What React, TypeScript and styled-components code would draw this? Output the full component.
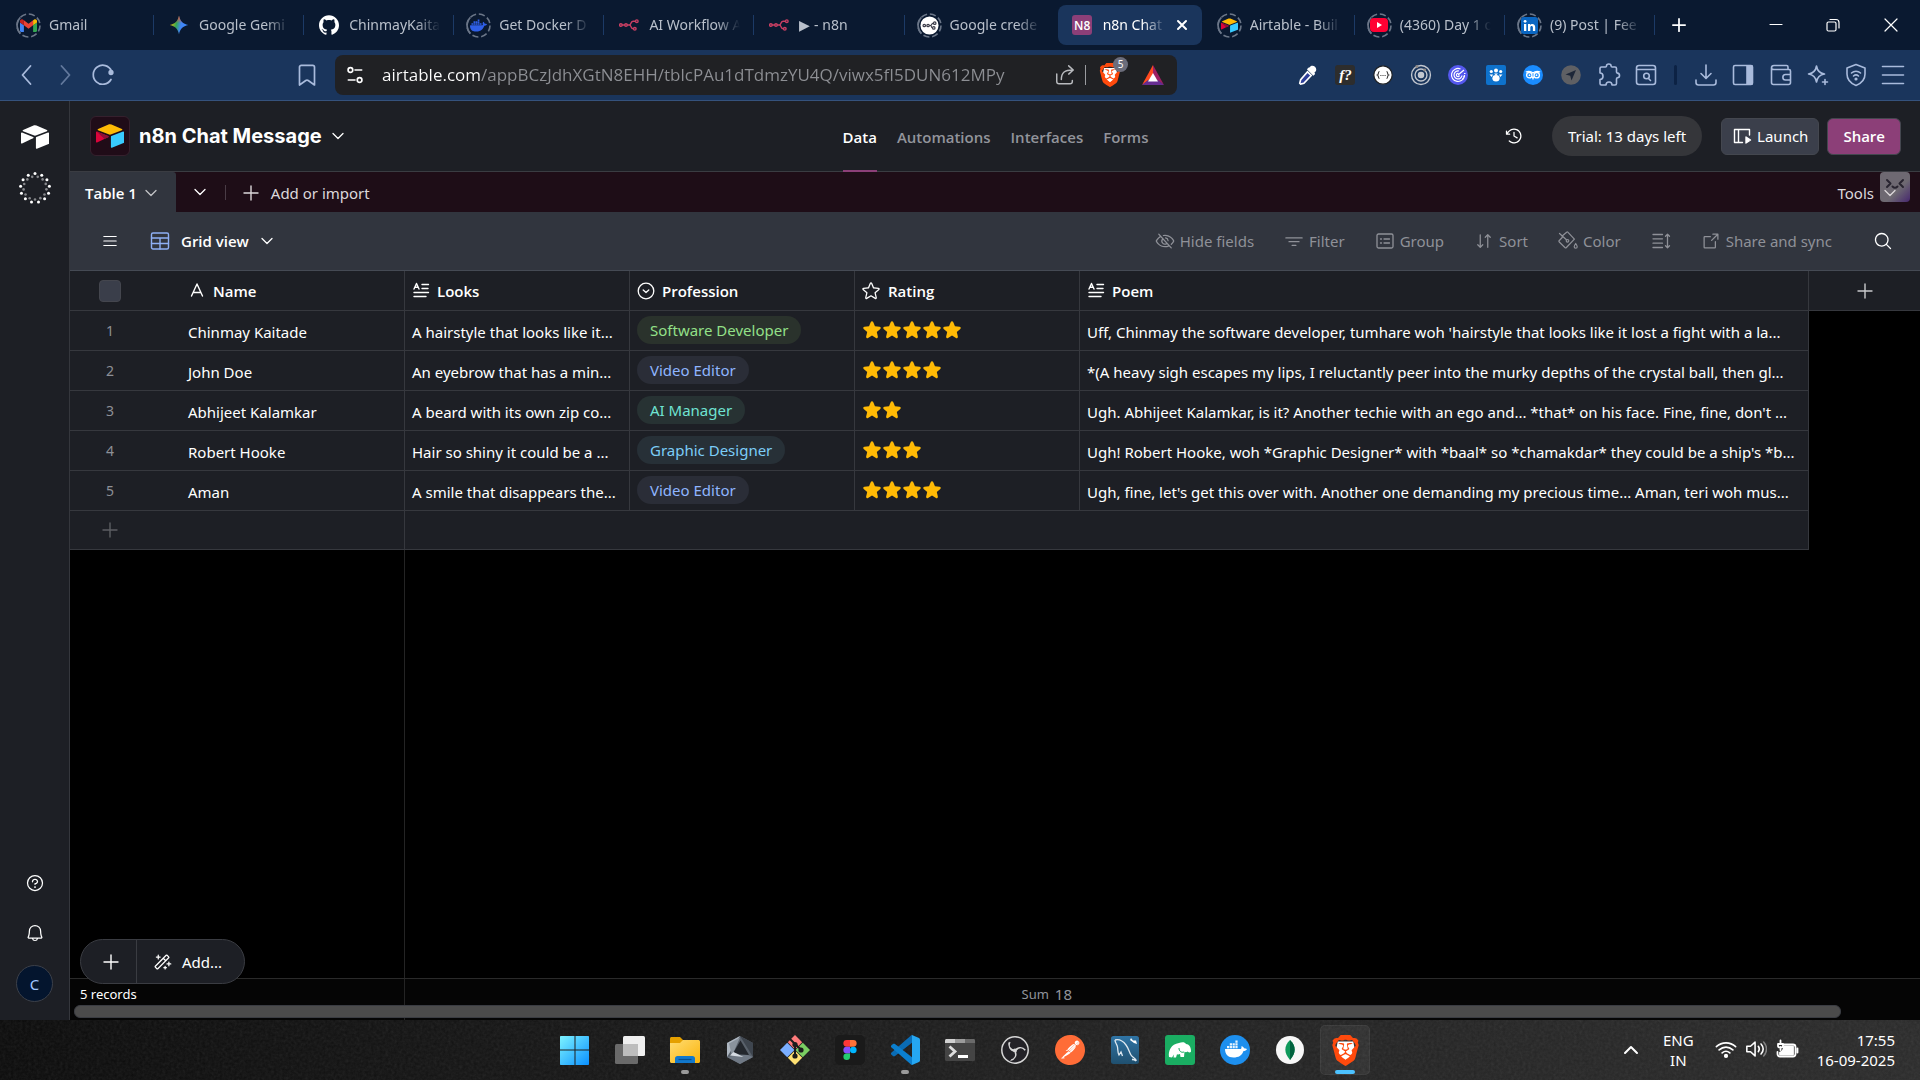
import React from "react";
import styled, { createGlobalStyle, css } from "styled-components";
import {
  PiArrowsDownUp,
  PiArrowSquareOut,
  PiBell,
  PiClockCounterClockwise,
  PiEyeSlash,
  PiFunnelSimple,
  PiList,
  PiMagicWand,
  PiMagnifyingGlass,
  PiQuestion,
  PiStar,
  PiStarFill,
} from "react-icons/pi";
import { SiBrave, SiDocker, SiGithub, SiPostman } from "react-icons/si";

const ui = `"Noto Sans", "Open Sans", sans-serif`;
const uiBold = `"Open Sans", "Noto Sans", sans-serif`;

const GlobalStyle = createGlobalStyle`
  *, *::before, *::after { box-sizing: border-box; }
  body { margin: 0; background: #000; color: #fff; font-family: ${ui}; font-size: 15px; }
  button, input { font: inherit; color: inherit; }
  button { background: none; border: 0; padding: 0; cursor: pointer; }
  svg { display: block; flex: none; }
`;

const Screen = styled.div`
  display: flex;
  flex-direction: column;
  min-height: 100vh;
`;

/* ---------- shared drawings ---------- */

type SvgProps = { size?: number; box?: string; children: React.ReactNode; stroke?: string; sw?: number };

const Line = ({ size = 24, box = "0 0 24 24", stroke = "currentColor", sw = 1.6, children }: SvgProps) => (
  <svg
    width={size}
    height={size}
    viewBox={box}
    fill="none"
    stroke={stroke}
    strokeWidth={sw}
    strokeLinecap="round"
    strokeLinejoin="round"
    aria-hidden="true"
  >
    {children}
  </svg>
);

const Art = ({ size = 24, box = "0 0 24 24", children }: SvgProps) => (
  <svg width={size} height={size} viewBox={box} aria-hidden="true">
    {children}
  </svg>
);

const Chevron = ({ size = 14, sw = 1.3 }: { size?: number; sw?: number }) => (
  <Line size={size} box="0 0 14 14" sw={sw}>
    <path d="M2 4.5 7 9.5l5-5" />
  </Line>
);

const Plus = ({ size = 16, sw = 1.4 }: { size?: number; sw?: number }) => (
  <Line size={size} box="0 0 16 16" sw={sw}>
    <path d="M8 1v14M1 8h14" />
  </Line>
);

const AIR_TOP =
  "M11.992 1.966c-.434 0-.87.086-1.28.257L1.779 5.917c-.503.208-.49.908.012 1.116l8.982 3.558a3.266 3.266 0 0 0 2.454 0l8.982-3.558c.503-.196.503-.908.012-1.116l-8.957-3.694a3.255 3.255 0 0 0-1.272-.257z";
const AIR_RIGHT =
  "M23.4 8.056a.589.589 0 0 0-.222.045l-10.012 3.877a.612.612 0 0 0-.38.564v8.896a.6.6 0 0 0 .821.552L23.62 18.1a.583.583 0 0 0 .38-.551V8.653a.6.6 0 0 0-.6-.596z";
const AIR_LEFT =
  "M.676 8.095a.644.644 0 0 0-.48.19C.086 8.396 0 8.53 0 8.69v8.355c0 .442.515.737.908.54l6.27-3.006.307-.147 2.969-1.436c.466-.22.43-.908-.061-1.092L.883 8.138a.57.57 0 0 0-.207-.044z";

const Airtable = ({ size = 28, mono = false }: { size?: number; mono?: boolean }) => (
  <Art size={size}>
    <path d={AIR_TOP} fill={mono ? "#fff" : "#ffba05"} />
    <path d={AIR_RIGHT} fill={mono ? "#fff" : "#39caff"} />
    <path d={AIR_LEFT} fill={mono ? "#fff" : "#dc043b"} />
    {!mono && <path d="M7.3 14.5 .5 8.1l9.9 3.8c.5.2.5.9.06 1.1z" fill="#8c1036" />}
  </Art>
);

const N8n = ({ size = 20, color = "#c93f63" }: { size?: number; color?: string }) => (
  <Line size={size} box="0 0 20 20" stroke={color} sw={1.4}>
    <circle cx="1.900" cy="10" r="1.300" />
    <circle cx="7" cy="10" r="1.300" />
    <circle cx="17.800" cy="6.200" r="1.300" />
    <circle cx="15.800" cy="13.800" r="1.300" />
    <path d="M3.300 10h2.300M8.400 10h1.800c2.400 0 1-3.800 3.800-3.800h2.400M10.400 10c2.200 0 1 3.800 4 3.800" />
  </Line>
);

const BraveMark = ({ size = 24 }: { size?: number }) => (
  <svg width={size} height={size} viewBox="0 0 24 24" aria-hidden="true">
    <path d="M6 5h12l1 5-2 6-5 4-5-4-2-6z" fill="#fff" />
    <SiBrave size={24} color="#ff4a0d" />
  </svg>
);

/* ---------- browser tabs ---------- */

const TabStrip = styled.div`
  display: flex;
  align-items: center;
  height: 50px;
  padding-left: 4px;
  background: #0a1930;
  color: #b9c0cb;
`;

const TabList = styled.div`
  display: flex;
  flex: 1;
  min-width: 0;
  height: 100%;
  align-items: center;
`;

const TabButton = styled.button<{ $active?: boolean; $divider?: boolean }>`
  display: flex;
  flex: 1 1 40px;
  align-items: center;
  gap: 8px;
  min-width: 0;
  height: 40px;
  padding: 0 14px 0 12px;
  text-align: left;
  ${(p) =>
    p.$divider &&
    css`
      background: linear-gradient(#1c3a66, #1c3a66) right center / 1px 20px no-repeat;
    `}
  ${(p) =>
    p.$active &&
    css`
      flex-basis: 34px;
      margin: 0 3px;
      padding: 0 12px;
      border-radius: 8px;
      background: #1a355c;
      color: #fff;
    `}
`;

const Favicon = styled.span`
  display: grid;
  flex: none;
  place-items: center;
  width: 25px;
  height: 25px;
  > * { grid-area: 1 / 1; }
`;

const Ring = () => (
  <svg width="25" height="25" viewBox="0 0 25 25" fill="none" aria-hidden="true">
    <circle cx="12.5" cy="12.5" r="11.500" stroke="#6b7688" strokeWidth="1.600" strokeDasharray="6.200 2.830" />
    <path d="M4.400 4.400a11.500 11.500 0 0 0 0 16.200" stroke="#6b7688" strokeWidth="1.600" />
  </svg>
);

const TabTitle = styled.span`
  flex: 1;
  min-width: 0;
  overflow: hidden;
  white-space: nowrap;
  font-size: 14px;
  line-height: 20px;
  mask-image: linear-gradient(90deg, #000 calc(100% - 24px), transparent);
`;

const NBadge = styled.span`
  display: grid;
  place-items: center;
  width: 20px;
  height: 20px;
  border-radius: 3px;
  background: #8c3f78;
  color: #fff;
  font-size: 12px;
  font-weight: 600;
  font-family: ${uiBold};
`;

const StripButton = styled.button<{ $w: number }>`
  display: grid;
  flex: none;
  place-items: center;
  width: ${(p) => p.$w}px;
  height: 100%;
  color: #fff;
`;

const WindowControls = styled.div`
  display: flex;
  height: 100%;
  padding-left: 45px;
`;

const GmailMark = () => (
  <Art size={17}>
    <path d="M0 6v13.500c0 .9.7 1.600 1.600 1.600h3.900V11.700L0 7.600z" fill="#4285f4" />
    <path d="M18.500 21.100h3.900c.9 0 1.600-.7 1.600-1.600V7.600l-5.500 4.100z" fill="#34a853" />
    <path d="M5.500 11.700V4.600L12 9.500l6.500-4.900v7.100L12 16.600z" fill="#ea4335" />
    <path d="M18.500 4.600v7.100L24 7.600V5.500c0-2-2.300-3.200-3.900-2z" fill="#fbbc04" />
    <path d="M5.500 4.600v7.100L0 7.600V5.500c0-2 2.300-3.200 3.900-2z" fill="#c5221f" />
  </Art>
);

const STAR4 = "M12 1c1.200 6.200 4.800 9.800 11 11-6.200 1.200-9.800 4.800-11 11-1.200-6.200-4.800-9.800-11-11 6.200-1.200 9.800-4.800 11-11z";

const GeminiMark = () => (
  <Art size={20}>
    <defs>
      <linearGradient id="gem" x1="0" y1="0.4" x2="1" y2="0.6">
        <stop offset="0" stopColor="#fbbc04" />
        <stop offset="0.35" stopColor="#34a853" />
        <stop offset="0.6" stopColor="#4285f4" />
        <stop offset="1" stopColor="#3a8bff" />
      </linearGradient>
      <linearGradient id="gemTop" x1="0" y1="0" x2="0" y2="1">
        <stop offset="0" stopColor="#ff4641" />
        <stop offset="0.4" stopColor="#ff4641" stopOpacity="0" />
      </linearGradient>
    </defs>
    <path d={STAR4} fill="url(#gem)" />
    <path d={STAR4} fill="url(#gemTop)" />
  </Art>
);

const tabs: { title: string; icon: React.ReactNode; ring?: boolean; active?: boolean; divider?: boolean }[] = [
  { title: "Gmail", icon: <GmailMark />, ring: true, divider: true },
  { title: "Google Gemi", icon: <GeminiMark />, divider: true },
  { title: "ChinmayKaita", icon: <SiGithub size={20} color="#fff" />, divider: true },
  { title: "Get Docker D", icon: <SiDocker size={17} color="#2f5fe8" />, ring: true, divider: true },
  { title: "AI Workflow A", icon: <N8n />, divider: true },
  { title: "▶ - n8n", icon: <N8n />, divider: true },
  {
    title: "Google crede",
    ring: true,
    icon: (
      <Art size={19} box="0 0 20 20">
        <circle cx="10" cy="10" r="9.500" fill="#fff" />
        <g fill="none" stroke="#3c3d4a" strokeWidth="1.300">
          <circle cx="4.500" cy="10" r="1.300" />
          <circle cx="8.500" cy="10" r="1.300" />
          <circle cx="15.500" cy="7.500" r="1.300" />
          <circle cx="14.500" cy="12.500" r="1.300" />
          <path d="M10 10h1c1.500 0 1-2.500 3-2.500M11 10c1.500 0 .5 2.500 2.200 2.500" />
        </g>
      </Art>
    ),
  },
  { title: "n8n Chat", icon: <NBadge>N8</NBadge>, active: true },
  { title: "Airtable - Buil", icon: <Airtable size={17} />, ring: true, divider: true },
  {
    title: "(4360) Day 1 o",
    ring: true,
    divider: true,
    icon: (
      <Art size={18} box="0 0 18 18">
        <rect y="2" width="18" height="14" rx="4" fill="#ff0033" />
        <path d="M7 6v6l5-3z" fill="#fff" />
      </Art>
    ),
  },
  {
    title: "(9) Post | Fee",
    ring: true,
    divider: true,
    icon: (
      <Art size={17} box="0 0 17 17">
        <rect width="17" height="17" rx="3" fill="#0a66c2" />
        <path d="M3 7h2.300v7H3zM7 7h2.200v1c1-1.700 5-1.700 5 2v4h-2.300v-3.600c0-2-2.600-2-2.600 0V14H7z" fill="#fff" />
        <circle cx="4.100" cy="4.300" r="1.400" fill="#fff" />
      </Art>
    ),
  },
];

const BrowserTabs = () => (
  <TabStrip>
    <TabList role="tablist" aria-label="Open tabs">
      {tabs.map((t) => (
        <TabButton key={t.title} role="tab" aria-selected={!!t.active} $active={t.active} $divider={t.divider}>
          <Favicon>
            {t.ring && <Ring />}
            {t.icon}
          </Favicon>
          <TabTitle>{t.title}</TabTitle>
          {t.active && (
            <Line size={16} box="0 0 16 16" sw={2}>
              <path d="m4 4 8 8M12 4l-8 8" />
            </Line>
          )}
        </TabButton>
      ))}
    </TabList>
    <StripButton $w={48} aria-label="New tab">
      <Plus sw={2} size={14} />
    </StripButton>
    <WindowControls>
      <StripButton $w={56} aria-label="Minimise">
        <Line size={14} box="0 0 14 14" sw={1.2}><path d="M1 6.500h12" /></Line>
      </StripButton>
      <StripButton $w={58} aria-label="Restore">
        <Line size={14} box="0 0 14 14" sw={1.2}>
          <path d="M1 5.500c0-1 .5-1.500 1.500-1.500h6c1 0 1.500.5 1.500 1.500v6c0 1-.5 1.500-1.500 1.500h-6c-1 0-1.500-.5-1.500-1.500zM4 1.500h6c2 0 3 1 3 3V10" />
        </Line>
      </StripButton>
      <StripButton $w={58} aria-label="Close window">
        <Line size={14} box="0 0 14 14" sw={1.2}><path d="m1 1 12 12M13 1 1 13" /></Line>
      </StripButton>
    </WindowControls>
  </TabStrip>
);

/* ---------- browser toolbar ---------- */

const AddressRow = styled.div`
  display: flex;
  align-items: center;
  height: 51px;
  background: #1a355c;
  border-bottom: 1px solid #35527d;
  color: #a9bbdc;
`;

const NavButtons = styled.div`
  display: grid;
  grid-template-columns: repeat(3, 38px);
  padding-left: 8px;
`;

const IconButton = styled.button<{ $dim?: boolean }>`
  display: grid;
  place-items: center;
  min-width: 24px;
  height: 32px;
  opacity: ${(p) => (p.$dim ? 0.5 : 1)};
`;

const BookmarkSlot = styled.div`
  margin: 0 16px 0 auto;
`;

const NavZone = styled.div`
  display: flex;
  align-items: center;
  width: 335px;
  flex: none;
`;

const AddressBox = styled.div`
  display: flex;
  flex: 1;
  align-items: center;
  height: 40px;
  padding: 0 12px 0 10px;
  border-radius: 8px;
  background: #202124;
  color: #fff;
`;

const AddressInput = styled.input`
  flex: 1;
  min-width: 0;
  margin: 0 8px 0 17px;
  padding: 0;
  border: 0;
  outline: 0;
  font-family: ${uiBold};
  font-size: 17px;
  line-height: 26px;
  background: linear-gradient(90deg, #ffffff 98px, #8d8f94 98px);
  background-clip: text;
  -webkit-text-fill-color: transparent;
`;

const AddressRule = styled.span`
  width: 1px;
  height: 20px;
  margin: 0 12px 0 8px;
  background: #9a9ca0;
`;

const ShieldButton = styled(IconButton)`
  position: relative;
  margin-right: 19px;
`;

const ShieldCount = styled.span`
  position: absolute;
  top: -2px;
  right: -6px;
  display: grid;
  place-items: center;
  width: 15px;
  height: 15px;
  border-radius: 50%;
  background: #6b6d7b;
  color: #fff;
  font-size: 10px;
  line-height: 15px;
`;

const Extensions = styled.div<{ $n: number; $w: number }>`
  display: grid;
  grid-template-columns: repeat(${(p) => p.$n}, 1fr);
  width: ${(p) => p.$w}px;
  flex: none;
`;

const ToolbarRule = styled.span`
  width: 3px;
  height: 20px;
  margin: 0 10px 0 9px;
  border-radius: 2px;
  background: #0c2244;
`;

const RightZone = styled.div`
  display: flex;
  align-items: center;
  padding: 0 8px 0 112px;
`;

const FnBadge = styled.span`
  display: grid;
  place-items: center;
  width: 20px;
  height: 20px;
  border-radius: 3px;
  background: #2d2d2d;
  color: #fff;
  font: italic 700 15px/20px "Liberation Serif", serif;
`;

const Dropper = () => (
  <Art size={22}>
    <path d="M14 3.500c2-3 7-1 7 2.500 0 1.500-.8 2.500-2 3.400l.8 1.400-2 2-7-7 2-2z" fill="#fff" />
    <path d="m11.500 8.500 4 4-8 8.500-3.500 1-1-1 1-4z" fill="#2e3f9a" stroke="#fff" strokeWidth="1.800" />
  </Art>
);

const extA: [string, React.ReactNode][] = [
  ["Colour picker", <Dropper />],
  ["Font finder", <FnBadge>f?</FnBadge>],
  ["JSON viewer", (
    <Art size={20} box="0 0 20 20">
      <circle cx="10" cy="10" r="9.200" fill="#fff" stroke="#1d2024" strokeWidth="1.200" />
      <path d="M6.500 6.500c-1.600 0-.6 3-2 3.500 1.400.5.4 3.500 2 3.500M13.500 6.500c1.600 0 .6 3 2 3.500-1.400.5-.4 3.500-2 3.500" fill="none" stroke="#333" strokeWidth="1.100" />
      <path d="M7.400 10.500h1M9.500 10.500h1M11.600 10.500h1" stroke="#333" strokeWidth="1.100" />
    </Art>
  )],
  ["Orbit", (
    <Line size={22} sw={1.5} stroke="#c3c7cf">
      <circle cx="12" cy="12" r="10.300" />
      <circle cx="12" cy="12" r="6.500" />
      <circle cx="12" cy="12" r="2.800" fill="#c3c7cf" />
      <circle cx="7.500" cy="2.800" r="1" fill="#8f8a88" stroke="#8f8a88" />
      <circle cx="16" cy="6.500" r="0.800" fill="#8f8a88" stroke="#8f8a88" />
    </Line>
  )],
  ["Tracker", (
    <Art size={20} box="0 0 20 20">
      <circle cx="10" cy="10" r="10" fill="#5558ee" />
      <path d="M16.500 10a6.500 6.500 0 1 1-4-6M14 10.500a4 4 0 1 1-3-4.500M10 10l6-5M11.500 10.500a1.600 1.600 0 1 1-1-2" fill="none" stroke="#fff" strokeWidth="1.200" />
      <path d="M16 8.500h1.500M15.500 11.500h1.500M14 14h1.500" stroke="#fff" strokeWidth="1.200" />
    </Art>
  )],
  ["Community", (
    <Art size={20} box="0 0 20 20">
      <rect width="20" height="20" rx="2" fill="#0e72cc" />
      <circle cx="10" cy="5.500" r="2" fill="#fff" /><circle cx="5.300" cy="6.500" r="1.600" fill="#fff" /><circle cx="14.700" cy="6.500" r="1.600" fill="#fff" />
      <path d="M3.500 9.500h3.500l-1.300 2.500zM16.500 9.500H13l1.300 2.500zM8 8.500h4L10 10.500z" fill="#fff" />
      <ellipse cx="10" cy="13.300" rx="3.600" ry="3.200" fill="#fff" />
    </Art>
  )],
  ["Owl", (
    <Art size={20} box="0 0 20 20">
      <circle cx="10" cy="10" r="10" fill="#1a8cff" />
      <g fill="none" stroke="#fff" strokeWidth="1.300"><circle cx="6.300" cy="10.200" r="2.700" /><circle cx="13.700" cy="10.200" r="2.700" /><path d="M9.200 11.500 10 13.500l.8-2M2.800 7c3-1.200 5.500-.5 7.200 1 1.700-1.500 4.200-2.200 7.200-1" /></g>
      <circle cx="6.500" cy="10.200" r="0.900" fill="#fff" /><circle cx="13.500" cy="10.200" r="0.900" fill="#fff" />
    </Art>
  )],
  ["Navigator", (
    <Art size={20} box="0 0 20 20">
      <circle cx="10" cy="10" r="9.800" fill="#5f6064" />
      <path d="m15 5-4.500 10.500-1.300-4.700L4.500 9.500z" fill="#1d2638" />
    </Art>
  )],
  ["Extensions", (
    <Line size={24}>
      <path d="M3 5.500C3 4.500 3.600 4 4.500 4h4c.600 0 1-.4 1-1 0-2.700 4.600-2.700 4.600 0 0 .6.4 1 1 1H18c1 0 1.500.5 1.500 1.500V9c0 .7.4 1 1 1.100 2.700.4 2.700 4.300 0 4.700-.6.100-1 .4-1 1.100v4.600c0 1-.5 1.500-1.500 1.500h-3c0-4-6-4-6 0H4.500c-.9 0-1.500-.5-1.500-1.500v-4c4 0 4-6.500 0-6.500z" />
    </Line>
  )],
  ["Search tabs", (
    <Line size={24}>
      <rect x="2.500" y="2.500" width="19" height="19" rx="2.500" />
      <path d="M3 6.500h18M14.500 15.500l2 2" /><circle cx="12.500" cy="13" r="2.800" />
    </Line>
  )],
];

const extB: [string, React.ReactNode][] = [
  ["Downloads", <Line><path d="M12 2v13M7 10.500l5 5 5-5M2 17v2.500c0 1.500.8 2.500 2.500 2.500h15c1.700 0 2.500-1 2.500-2.500V17" /></Line>],
  ["Sidebar", <Line><rect x="2.500" y="2.500" width="19" height="19" rx="1.500" /><path d="M16 3h5v18h-5z" fill="currentColor" /></Line>],
  ["Wallet", <Line><path d="M2.500 5c0-1.600 1-2.500 2.500-2.500h12.500c1 0 1.500.5 1.500 1.500v2.500M2.500 5c0 1 1 1.500 2.500 1.500h15c1 0 1.500.5 1.500 1.500v11.500c0 1-.5 2-2 2H4.500c-1.200 0-2-1-2-2zM21.500 11.500h-5c-3.500 0-3.500 5.500 0 5.500h5" /></Line>],
  ["Leo AI", <Line><path d="M10.500 3c.8 5 3 7.200 8 8-5 .8-7.200 3-8 8-.8-5-3-7.200-8-8 5-.8 7.200-3 8-8zM19 16.500v5M16.500 19h5" /></Line>],
  ["VPN", <Line><path d="M12 1.500 21 5v6c0 6-4 9.500-9 11.500C7 20.500 3 17 3 11V5zM7.500 10c2.500-2.300 6.500-2.300 9 0M9.500 13c1.500-1.300 3.500-1.300 5 0" /><circle cx="12" cy="16" r="0.800" /></Line>],
  ["Menu", <Line><path d="M1.500 3.500h21M1.500 12h21M1.500 20.500h21" /></Line>],
];

const AddressBar = () => (
  <AddressRow>
    <NavZone>
      <NavButtons>
        <IconButton aria-label="Back"><Line sw={1.8}><path d="m15.500 3-8 9 8 9" /></Line></IconButton>
        <IconButton aria-label="Forward" $dim><Line sw={1.8}><path d="m8.500 3 8 9-8 9" /></Line></IconButton>
        <IconButton aria-label="Reload">
          <Line sw={1.7}><path d="M20 16.500A9.500 9.500 0 1 1 20.500 8" /><circle cx="20" cy="9.500" r="1.800" fill="currentColor" /></Line>
        </IconButton>
      </NavButtons>
      <BookmarkSlot>
        <IconButton aria-label="Bookmark"><Line sw={1.7}><path d="M4.500 4c0-1 .8-1.700 1.800-1.700h11.400c1 0 1.800.7 1.800 1.700v18l-6.300-4.500c-.8-.5-1.600-.5-2.400 0L4.500 22z" /></Line></IconButton>
      </BookmarkSlot>
    </NavZone>
    <AddressBox>
      <Line size={20} sw={2}>
        <circle cx="6.500" cy="6" r="2.800" /><path d="M12 6h8M4 18h8" /><circle cx="17.500" cy="18" r="2.800" />
      </Line>
      <AddressInput aria-label="Address" defaultValue="airtable.com/appBCzJdhXGtN8EHH/tblcPAu1dTdmzYU4Q/viwx5fI5DUN612MPy" />
      <IconButton aria-label="Share page">
        <Line size={22} stroke="#b9bbbf"><path d="M3 11v8c0 1.500 1 2.500 2.500 2.500h12c1.500 0 2.500-1 2.500-2.500v-1M8 17C8 9 12 6.500 20.500 6.500M16 2l5 4.500-5 4.500" /></Line>
      </IconButton>
      <AddressRule />
      <ShieldButton aria-label="Shields">
        <BraveMark size={24} />
        <ShieldCount>5</ShieldCount>
      </ShieldButton>
      <IconButton aria-label="Rewards">
        <Art size={24}>
          <path d="M12 2 1 22l11-8z" fill="#ff4a1f" />
          <path d="M12 2l11 20-11-8z" fill="#9e1f63" />
          <path d="M1 22h22l-6-5H7z" fill="#662d91" />
          <path d="m12 10 5 8.500H7z" fill="#fff" />
        </Art>
      </IconButton>
    </AddressBox>
    <RightZone>
      <Extensions $n={10} $w={376}>
        {extA.map(([name, icon]) => <IconButton key={name} aria-label={name}>{icon}</IconButton>)}
      </Extensions>
      <ToolbarRule />
      <Extensions $n={6} $w={225}>
        {extB.map(([name, icon]) => <IconButton key={name} aria-label={name}>{icon}</IconButton>)}
      </Extensions>
    </RightZone>
  </AddressRow>
);

/* ---------- airtable shell ---------- */

const Workspace = styled.div`
  display: flex;
  flex: 1;
  background: #1d1f25;
`;

const Rail = styled.aside`
  display: flex;
  flex-direction: column;
  align-items: center;
  width: 70px;
  flex: none;
  padding: 20px 0 18px;
  border-right: 1px solid #35373d;
`;

const RailTop = styled.div`
  display: grid;
  gap: 19px;
  justify-items: center;
  margin-bottom: auto;
`;

const RailBottom = styled.div`
  display: grid;
  gap: 14px;
  justify-items: center;
`;

const RailButton = styled(IconButton)`
  height: 36px;
`;

const Avatar = styled.button`
  display: grid;
  place-items: center;
  width: 37px;
  height: 37px;
  border: 1px solid #3c4049;
  border-radius: 50%;
  background: #04152e;
  color: #a0c6ff;
`;

const Main = styled.div`
  display: flex;
  flex: 1;
  min-width: 0;
  flex-direction: column;
`;

const BaseHeader = styled.header`
  display: grid;
  grid-template-columns: 1fr auto 1fr;
  align-items: center;
  height: 71px;
  padding: 0 19px 0 20px;
  border-bottom: 1px solid #3a3c42;
`;

const BaseTitle = styled.button`
  display: flex;
  align-items: center;
  gap: 9px;
  justify-self: start;
  font-family: Inter, "Open Sans", sans-serif;
  font-size: 20px;
  font-weight: 700;
`;

const BaseIcon = styled.span`
  display: grid;
  place-items: center;
  width: 40px;
  height: 40px;
  border: 1px solid #35202d;
  border-radius: 6px;
  background: #200c18;
`;

const SectionNav = styled.nav`
  display: flex;
  align-self: stretch;
  gap: 20px;
`;

const SectionLink = styled.a<{ $on?: boolean }>`
  display: flex;
  align-items: center;
  padding-top: 3px;
  border-bottom: 2px solid ${(p) => (p.$on ? "#8c3f78" : "transparent")};
  margin-bottom: -1px;
  color: ${(p) => (p.$on ? "#fff" : "#92949b")};
  font-family: ${uiBold};
  font-size: 15px;
  font-weight: 600;
  text-decoration: none;
`;

const HeaderActions = styled.div`
  display: flex;
  align-items: center;
  justify-content: flex-end;
`;

const TrialPill = styled.button`
  height: 40px;
  margin: 0 19px 0 26px;
  padding: 0 16px;
  border-radius: 20px;
  background: #35363a;
`;

const HeaderButton = styled.button<{ $primary?: boolean }>`
  display: flex;
  align-items: center;
  gap: 5px;
  height: 37px;
  margin-left: ${(p) => (p.$primary ? 8 : 0)}px;
  padding: 0 ${(p) => (p.$primary ? 15 : 10)}px;
  border: 1px solid #44474f;
  border-radius: 6px;
  background: ${(p) => (p.$primary ? "#8c3f78" : "#3b3f4b")};
  font-family: ${(p) => (p.$primary ? uiBold : ui)};
  font-weight: ${(p) => (p.$primary ? 600 : 400)};
`;

const TableStrip = styled.div`
  display: flex;
  align-items: center;
  height: 40px;
  padding-right: 23px;
  background: #1e0d17;
`;

const TableTab = styled.button`
  display: flex;
  align-items: center;
  gap: 7px;
  height: 100%;
  padding: 1px 18px 0 15px;
  border-radius: 0 3px 0 0;
  background: #31353e;
  font-family: ${uiBold};
  font-weight: 600;
  font-size: 15px;
  svg { opacity: 0.7; }
`;

const StripRule = styled.span`
  width: 1px;
  height: 15px;
  margin: 0 17px 0 18px;
  background: #4a3c46;
`;

const PlainButton = styled.button<{ $gap?: number; $strong?: boolean }>`
  display: flex;
  align-items: center;
  gap: ${(p) => p.$gap ?? 5}px;
  min-height: 32px;
  color: inherit;
  ${(p) =>
    p.$strong &&
    css`
      font-family: ${uiBold};
      font-weight: 600;
    `}
`;

const MoreTables = styled(PlainButton)`
  margin-left: 17px;
`;

const ToolsArea = styled.div`
  position: relative;
  align-self: stretch;
  display: flex;
  margin-left: auto;
  padding-top: 1px;
`;

const ToolsButton = styled(PlainButton)`
  position: relative;
  color: #dcd8db;
`;

const BotBadge = styled.span`
  position: absolute;
  top: 0;
  right: -13px;
  width: 30px;
  height: 30px;
  border-radius: 4px;
  background: linear-gradient(135deg, #77747c 60%, #4b2a78);
  opacity: 0.9;
`;

const ViewBar = styled.div`
  display: flex;
  align-items: center;
  height: 59px;
  padding: 0 27px 0 31px;
  background: #31353e;
  border-bottom: 1px solid #454a54;
`;

const ViewName = styled.div`
  display: flex;
  align-items: center;
  gap: 31px;
`;

const ViewTools = styled.div`
  display: flex;
  align-items: center;
  gap: 30px;
  margin-left: auto;
  color: #8f9198;
`;

const SearchButton = styled(PlainButton)`
  margin-left: 11px;
  color: #fff;
`;

const AddImport = styled(PlainButton)`
  padding-top: 1px;
  color: #dcd8db;
`;

/* ---------- grid ---------- */

const GridArea = styled.div`
  position: relative;
  display: flex;
  flex: 1;
  flex-direction: column;
  background: #000;
`;

const DataTable = styled.table`
  width: 100%;
  table-layout: fixed;
  border-collapse: separate;
  border-spacing: 0;
`;

const line = "1px solid #36383e";

const HeadCell = styled.th<{ $pad?: number }>`
  height: 40px;
  padding: 0 0 0 ${(p) => p.$pad ?? 8}px;
  background: #1d1f25;
  border-bottom: ${line};
  border-right: ${line};
  font-family: ${uiBold};
  font-weight: 600;
  font-size: 15px;
  text-align: left;
  &:first-child { border-right: 0; }
  &:last-child { border-right: 0; }
`;

const HeadLabel = styled.span`
  display: flex;
  align-items: center;
  gap: 7px;
  padding-top: 1px;
`;

const SelectAll = styled.input`
  appearance: none;
  display: block;
  width: 22px;
  height: 22px;
  margin: 0 0 0 29px;
  border: 1px solid #44464e;
  border-radius: 4px;
  background: #3a3e4a;
`;

const Cell = styled.td<{ $pad?: number }>`
  height: 40px;
  padding: 3px 4px 0 ${(p) => p.$pad ?? 7}px;
  background: #1d1f25;
  border-bottom: ${line};
  border-right: ${line};
  overflow: hidden;
  white-space: nowrap;
  line-height: 20px;
`;

const PlainCell = styled(Cell)`
  padding-top: 0;
`;

const NumberCell = styled(Cell)`
  padding: 0;
  border-right: 0;
  text-align: center;
  color: #8d9097;
  font-size: 14px;
`;

const AddCell = styled(Cell)`
  height: 39px;
  padding: 0;
`;

const CenterButton = styled.button`
  display: grid;
  place-items: center;
  width: 100%;
  height: 38px;
  color: #c9cacd;
`;

const AddRowButton = styled(CenterButton)`
  width: 80px;
  color: #5c5e63;
`;

const Pill = styled.span<{ $bg: string; $fg: string }>`
  display: block;
  width: fit-content;
  height: 28px;
  margin-bottom: 1px;
  padding: 0 13px;
  border-radius: 14px;
  background: ${(p) => p.$bg};
  color: ${(p) => p.$fg};
  line-height: 29px;
`;

const Stars = styled.span`
  display: flex;
  margin-bottom: 1px;
  color: #ffba05;
`;

const Rest = styled.div`
  display: flex;
  flex: 1;
`;

const FrozenEdge = styled.div`
  width: 335px;
  border-right: 1px solid #242424;
`;

const AddPill = styled.div`
  position: absolute;
  left: 10px;
  bottom: 36px;
  display: flex;
  height: 45px;
  border: 1px solid #3a3c42;
  border-radius: 23px;
  background: #1d1f25;
`;

const PillButton = styled.button<{ $first?: boolean }>`
  display: flex;
  align-items: center;
  gap: 10px;
  padding: 0 ${(p) => (p.$first ? 17 : 22)}px 0 ${(p) => (p.$first ? 22 : 15)}px;
  border-right: ${(p) => (p.$first ? "1px solid #3a3c42" : "0")};
`;

const SummaryBar = styled.footer`
  display: grid;
  grid-template-columns: 335px 1fr;
  height: 42px;
  border-top: 1px solid #2a2a2a;
  background: #050505;
  font-size: 13px;
  line-height: 18px;
`;

const RecordCount = styled.div`
  padding: 6px 10px 0;
  border-right: 1px solid #242424;
`;

const Sum = styled.div`
  display: flex;
  gap: 6px;
  justify-content: flex-end;
  width: 667px;
  padding-top: 6px;
  color: #92949b;
`;

const SumValue = styled.span`
  font-size: 15px;
`;

const ScrollBar = styled.div`
  position: absolute;
  left: 4px;
  right: 79px;
  bottom: 2px;
  height: 13px;
  border: 1px solid #3a3c42;
  border-radius: 6px;
  background: #4b4b4b;
`;

const LongText = () => (
  <Line size={18} box="0 0 18 18" sw={1.4}>
    <path d="M2 7 4.500 1.500 7 7M2.900 5.200h3.200M10 2.500h6.500M10 6.500h6M2 10.500h14.500M2 14.500h12" />
  </Line>
);

const columns: [string, React.ReactNode, number][] = [
  ["Name", <Line size={18} box="0 0 18 18" sw={1.4}><path d="M3.500 14 9 2l5.500 12M5.500 10.500h7" /></Line>, 38],
  ["Looks", <LongText />, 7],
  ["Profession", <Line size={18} box="0 0 18 18" sw={1.3}><circle cx="9" cy="9" r="7.800" /><path d="m6.200 8 2.800 2.500L11.800 8" /></Line>, 7],
  ["Rating", <PiStar size={20} />, 6],
  ["Poem", <LongText />, 7],
];

type Row = { name: string; looks: string; job: string; bg: string; fg: string; rating: number; poem: string };

const records: Row[] = [
  { name: "Chinmay Kaitade", looks: "A hairstyle that looks like it...", job: "Software Developer", bg: "#2a322c", fg: "#93e088", rating: 5, poem: "Uff, Chinmay the software developer, tumhare woh 'hairstyle that looks like it lost a fight with a la..." },
  { name: "John Doe", looks: "An eyebrow that has a min...", job: "Video Editor", bg: "#2a2d37", fg: "#8fb5ff", rating: 4, poem: "*(A heavy sigh escapes my lips, I reluctantly peer into the murky depths of the crystal ball, then gl..." },
  { name: "Abhijeet Kalamkar", looks: "A beard with its own zip co...", job: "AI Manager", bg: "#273233", fg: "#6fe3d2", rating: 2, poem: "Ugh. Abhijeet Kalamkar, is it? Another techie with an ego and... *that* on his face. Fine, fine, don't ..." },
  { name: "Robert Hooke", looks: "Hair so shiny it could be a ...", job: "Graphic Designer", bg: "#273037", fg: "#7ccdf7", rating: 3, poem: "Ugh! Robert Hooke, woh *Graphic Designer* with *baal* so *chamakdar* they could be a ship's *b..." },
  { name: "Aman", looks: "A smile that disappears the...", job: "Video Editor", bg: "#2a2d37", fg: "#8fb5ff", rating: 4, poem: "Ugh, fine, let's get this over with. Another one demanding my precious time... Aman, teri woh mus..." },
];

const Grid = () => (
  <GridArea>
    <DataTable>
      <colgroup>
        <col style={{ width: 80 }} />
        <col style={{ width: 255 }} />
        <col style={{ width: 225 }} />
        <col style={{ width: 225 }} />
        <col style={{ width: 225 }} />
        <col />
        <col style={{ width: 111 }} />
      </colgroup>
      <thead>
        <tr>
          <HeadCell $pad={0}><SelectAll type="checkbox" aria-label="Select all records" /></HeadCell>
          {columns.map(([name, icon, pad]) => (
            <HeadCell key={name} $pad={pad} scope="col"><HeadLabel>{icon}{name}</HeadLabel></HeadCell>
          ))}
          <HeadCell $pad={0}><CenterButton aria-label="Add field"><Plus /></CenterButton></HeadCell>
        </tr>
      </thead>
      <tbody>
        {records.map((r, i) => (
          <tr key={r.name}>
            <NumberCell>{i + 1}</NumberCell>
            <Cell $pad={38}>{r.name}</Cell>
            <Cell>{r.looks}</Cell>
            <PlainCell><Pill $bg={r.bg} $fg={r.fg}>{r.job}</Pill></PlainCell>
            <PlainCell>
              <Stars role="img" aria-label={`${r.rating} stars`}>
                {Array.from({ length: r.rating }, (_, n) => <PiStarFill key={n} size={20} />)}
              </Stars>
            </PlainCell>
            <Cell>{r.poem}</Cell>
          </tr>
        ))}
        <tr>
          <AddCell colSpan={2}><AddRowButton aria-label="Add record"><Plus /></AddRowButton></AddCell>
          <AddCell colSpan={4} />
        </tr>
      </tbody>
    </DataTable>
    <Rest><FrozenEdge /></Rest>
    <SummaryBar>
      <RecordCount>5 records</RecordCount>
      <Sum>Sum <SumValue>18</SumValue></Sum>
    </SummaryBar>
    <ScrollBar />
    <AddPill>
      <PillButton $first aria-label="Add record"><Plus /></PillButton>
      <PillButton><PiMagicWand size={20} />Add...</PillButton>
    </AddPill>
  </GridArea>
);

const Shell = () => (
  <Workspace>
    <Rail>
      <RailTop>
        <IconButton aria-label="Home"><Airtable size={28} mono /></IconButton>
        <Art size={32} box="0 0 32 32">
          {Array.from({ length: 13 }, (_, i) => {
            const a = (i / 13) * Math.PI * 2 - Math.PI / 2;
            return (
              <g key={i}>
                <circle cx={16 + 14.5 * Math.cos(a)} cy={16 + 14.5 * Math.sin(a)} r="1.500" fill="#fff" />
                <circle cx={16 + 11.5 * Math.cos(a + 0.24)} cy={16 + 11.5 * Math.sin(a + 0.24)} r="1.300" fill="#85868a" />
              </g>
            );
          })}
        </Art>
      </RailTop>
      <RailBottom>
        <RailButton aria-label="Help"><PiQuestion size={20} /></RailButton>
        <RailButton aria-label="Notifications"><PiBell size={20} /></RailButton>
        <Avatar aria-label="Account">C</Avatar>
      </RailBottom>
    </Rail>
    <Main>
      <BaseHeader>
        <BaseTitle>
          <BaseIcon><Airtable size={28} /></BaseIcon>
          n8n Chat Message
          <Chevron />
        </BaseTitle>
        <SectionNav>
          <SectionLink href="#data" $on>Data</SectionLink>
          <SectionLink href="#automations">Automations</SectionLink>
          <SectionLink href="#interfaces">Interfaces</SectionLink>
          <SectionLink href="#forms">Forms</SectionLink>
        </SectionNav>
        <HeaderActions>
          <IconButton aria-label="History"><PiClockCounterClockwise size={20} /></IconButton>
          <TrialPill>Trial: 13 days left</TrialPill>
          <HeaderButton>
            <Line size={20} box="0 0 20 20" sw={1.4}>
              <path d="M10.500 16.500H2.500v-13h15V9M6.500 3.500v13" />
              <path d="m14 11 4.500 3-4.500 3z" fill="currentColor" />
            </Line>
            Launch
          </HeaderButton>
          <HeaderButton $primary>Share</HeaderButton>
        </HeaderActions>
      </BaseHeader>
      <TableStrip>
        <TableTab>Table 1 <Chevron /></TableTab>
        <MoreTables aria-label="All tables"><Chevron /></MoreTables>
        <StripRule />
        <AddImport $gap={12}><Plus />Add or import</AddImport>
        <ToolsArea>
          <BotBadge>
            <Line size={30} box="0 0 30 30" stroke="#2a2733" sw={2}>
              <path d="m7 8 3.500 3.500L7 15M23 8l-3.500 3.500L23 15M12.500 14.500c1.500 1.500 3.500 1.500 5 0" />
            </Line>
          </BotBadge>
          <ToolsButton $gap={9}>Tools <Chevron /></ToolsButton>
        </ToolsArea>
      </TableStrip>
      <ViewBar>
        <ViewName>
          <PlainButton aria-label="Toggle views"><PiList size={18} /></PlainButton>
          <PlainButton $gap={11} $strong>
            <Line size={20} box="0 0 20 20" stroke="#8fb0f5" sw={1.4}>
              <rect x="1.500" y="2" width="17" height="16" rx="1.500" /><path d="M1.500 7h17M1.500 12.500h17M10 7v11" />
            </Line>
            Grid view
            <Chevron />
          </PlainButton>
        </ViewName>
        <ViewTools>
          <PlainButton><PiEyeSlash size={20} />Hide fields</PlainButton>
          <PlainButton><PiFunnelSimple size={20} />Filter</PlainButton>
          <PlainButton>
            <Line size={20} box="0 0 20 20" sw={1.3}>
              <rect x="2" y="3" width="16" height="14" rx="1.500" /><path d="M5.500 8h1M5.500 12h1M9 8h5.500M9 12h5.500" />
            </Line>
            Group
          </PlainButton>
          <PlainButton><PiArrowsDownUp size={20} />Sort</PlainButton>
          <PlainButton>
            <Line size={20} box="0 0 20 20" sw={1.2}>
              <path d="M1.500 2.500 8.700 9M4.200 5 8.600 1.200c.4-.4.8-.4 1.200 0l6.600 6.900-8 8.400c-.5.500-1 .5-1.500 0L1.300 11c-.5-.5-.5-1 0-1.500L4.200 6.500z" />
              <circle cx="9.500" cy="9.800" r="1.300" />
              <path d="M17.700 12.500c1 1.400 1.500 2.300 1.500 3.200a1.500 1.500 0 0 1-3 0c0-.9.5-1.800 1.500-3.200z" />
            </Line>
            Color
          </PlainButton>
          <PlainButton aria-label="Row height">
            <Line size={20} box="0 0 20 20" sw={1.3}>
              <path d="M2 3.500h9.500M2 7.800h9.500M2 12.200h9.500M2 16.500h9.500M16.500 3.500v13M14.500 5.300l2-2 2 2M14.500 14.700l2 2 2-2" />
            </Line>
          </PlainButton>
          <PlainButton><PiArrowSquareOut size={20} />Share and sync</PlainButton>
          <SearchButton aria-label="Search"><PiMagnifyingGlass size={20} /></SearchButton>
        </ViewTools>
      </ViewBar>
      <Grid />
    </Main>
  </Workspace>
);

/* ---------- taskbar ---------- */

const TaskbarRow = styled.div`
  position: relative;
  display: grid;
  grid-template-columns: 1fr auto 1fr;
  align-items: center;
  height: 60px;
  background: linear-gradient(90deg, #0a0a0a, #151515 30%, #202020 60%, #2a2a2a);
`;

const Grain = styled.svg`
  position: absolute;
  inset: 0;
  width: 100%;
  height: 100%;
  opacity: 0.1;
`;

const Apps = styled.div`
  display: flex;
  grid-column: 2;
  gap: 5px;
`;

const AppButton = styled.button<{ $mark?: "open" | "active" }>`
  position: relative;
  display: grid;
  place-items: center;
  width: 50px;
  height: 50px;
  border-radius: 5px;
  ${(p) => p.$mark === "active" && css`background: rgba(255, 255, 255, 0.06); box-shadow: inset 0 0 0 1px rgba(255, 255, 255, 0.05);`}
  ${(p) =>
    p.$mark &&
    css`
      &::after {
        content: "";
        position: absolute;
        bottom: 1px;
        width: ${p.$mark === "active" ? 20 : 8}px;
        height: 4px;
        border-radius: 2px;
        background: ${p.$mark === "active" ? "#4cc2ff" : "#9a9a9a"};
      }
    `}
`;

const Tray = styled.div`
  position: relative;
  display: flex;
  align-items: center;
  justify-content: flex-end;
  padding-right: 25px;
  font-size: 15px;
  line-height: 20px;
`;

const TrayText = styled.div<{ $align: "center" | "right"; $m: string }>`
  margin: ${(p) => p.$m};
  text-align: ${(p) => p.$align};
`;

const TrayIcons = styled.div`
  display: flex;
  gap: 8px;
`;

const apps: [string, React.ReactNode, ("open" | "active")?][] = [
  ["Start", (
    <Art size={30} box="0 0 30 30">
      <defs><linearGradient id="win" x1="0" y1="0" x2="1" y2="1"><stop offset="0" stopColor="#7df3ff" /><stop offset="1" stopColor="#0a90ff" /></linearGradient></defs>
      <path d="M0 2c0-.6.400-1 1-1h13.500v13.500H0zM15.500 1H28c.6 0 1 .4 1 1v12.500H15.500zM0 15.500h14.500V30H1c-.6 0-1-.4-1-1zM15.500 15.500H29V29c0 .6-.4 1-1 1H15.500z" fill="url(#win)" />
    </Art>
  )],
  ["Task view", (
    <Art size={30} box="0 0 30 30">
      <rect x="0" y="9" width="23" height="20" rx="1.500" fill="#6a6a6a" />
      <rect x="8" y="1" width="22" height="20" rx="1.500" fill="#efefef" />
      <path d="M8 9h15v12H9.500A1.500 1.500 0 0 1 8 19.500z" fill="#bdbdbd" />
    </Art>
  )],
  ["File Explorer", (
    <Art size={30} box="0 0 30 30">
      <defs><linearGradient id="fold" x1="0" y1="0" x2="1" y2="1"><stop offset="0" stopColor="#ffdc73" /><stop offset="1" stopColor="#fbb40a" /></linearGradient></defs>
      <path d="M0 3.500C0 2.700.7 2 1.500 2H10l3 3v5H0z" fill="#e5a000" />
      <path d="M0 8h10l3-3h15.500c.8 0 1.500.7 1.500 1.500v20c0 .8-.7 1.500-1.500 1.500h-27C.7 28 0 27.300 0 26.500z" fill="url(#fold)" />
      <path d="M5 28v-4.500c0-1.600 1-2.500 2.500-2.500h15c1.500 0 2.500.9 2.500 2.500V28z" fill="#1278cc" /><path d="M8.500 24.500h13" stroke="#064f91" strokeWidth="1.200" />
    </Art>
  ), "open"],
  ["Code editor", (
    <Art size={28} box="0 0 28 28">
      <path d="M14 0 27 7v14l-13 7L1 21V7z" fill="#59616b" />
      <path d="M14 0 1 7v14z" fill="#aeb7c1" /><path d="m14 0 13 7v14z" fill="#3e454e" /><path d="m1 21 13 7 13-7-8-3z" fill="#707985" />
      <path d="M3 7.500 14 1.500 6 20z" fill="#8a939d" />
      <path d="M14.500 4.500 23 19l-9-.5-6.500-2z" fill="#23272d" /><path d="m4 19.500 3.500-3.500 10 5z" fill="#d5dbe2" />
    </Art>
  )],
  ["Git", (
    <Art size={30} box="0 0 30 30">
      <path d="m15 0 7.200 7.200L15 14.500 7.800 7.200z" fill="#ff7b7b" /><path d="m22.800 7.800 7.200 7.200-7.200 7.200L15.500 15z" fill="#7bcf62" />
      <path d="M7.200 7.800 14.500 15l-7.300 7.200L0 15z" fill="#7aaeff" /><path d="m15 15.500 7.200 7.300L15 30l-7.200-7.200z" fill="#ffe173" />
      <path d="M9.500 3.500 15 9v12M15 9l6.500 6" stroke="#1c1c1c" strokeWidth="2" fill="none" /><circle cx="15" cy="9.500" r="2.600" fill="#1c1c1c" /><circle cx="15" cy="21" r="2.600" fill="#1c1c1c" /><circle cx="21" cy="15" r="2.600" fill="#1c1c1c" />
    </Art>
  )],
  ["Figma", (
    <Art size={30} box="0 0 30 30">
      <rect width="30" height="30" rx="5" fill="#1a1a1a" />
      <path d="M15 5h-3.300a3.300 3.300 0 0 0 0 6.700H15z" fill="#ff3737" /><path d="M15 5h3.300a3.300 3.300 0 0 1 0 6.700H15z" fill="#ff7237" />
      <path d="M15 11.700h-3.300a3.300 3.300 0 0 0 0 6.700H15z" fill="#874fff" /><circle cx="18.300" cy="15" r="3.300" fill="#00b6ff" />
      <path d="M15 18.400h-3.300a3.300 3.300 0 1 0 3.300 3.300z" fill="#24cb71" />
    </Art>
  )],
  ["Visual Studio Code", (
    <Art size={30} box="0 0 30 30">
      <path d="M22 7.800 5 21c-.6.500-1.400.5-2 0l-1.500-1.300c-.8-.7-.8-1.500 0-2.200L21 .6c.400-.4 1-.600 1-.6z" fill="#0a6cb5" />
      <path d="M22 22.200 5 9c-.6-.5-1.400-.5-2 0l-1.500 1.300c-.8.7-.8 1.500 0 2.200L21 29.400c.4.400 1 .6 1 .6z" fill="#0b7fcf" />
      <path d="m22 0 7 3c.6.300 1 .9 1 1.500v21c0 .6-.4 1.200-1 1.500l-7 3z" fill="#25a7f2" />
    </Art>
  ), "open"],
  ["Terminal", (
    <Art size={30} box="0 0 30 30">
      <rect y="4" width="30" height="22" rx="1.500" fill="#444" /><path d="M0 5.500C0 4.700.7 4 1.500 4H10v4H0z" fill="#d0d0d0" /><path d="M10 4h10v4H10z" fill="#9b9b9b" /><path d="M20 4h8.500c.8 0 1.500.7 1.500 1.500V8H20z" fill="#6a6a6a" />
      <path d="m4.500 11.500 5.500 5-5.500 5" stroke="#ddd" strokeWidth="2.800" fill="none" /><path d="M13 20h10v3H13z" fill="#fff" />
    </Art>
  )],
  ["OBS Studio", (
    <Art size={30} box="0 0 30 30">
      <circle cx="15" cy="15" r="13.200" fill="#232227" stroke="#d6d6d6" strokeWidth="1.500" />
      <path d="M15 16c-4.500 0-7-4-5-9M15 16c2-4 7-5 10.500-1M15 16c2.500 4 0 8.500-4.500 9.500M9 7.500c-1 4 2 7 5 7.500M25 15.500c-2-3.500-6-3.500-8.500-.5M11 25c4-1 5.500-4.500 4-7.500" stroke="#d6d6d6" strokeWidth="1.100" fill="none" />
      <circle cx="15" cy="15.500" r="2" fill="#d6d6d6" />
    </Art>
  )],
  ["Postman", (
    <svg width="30" height="30" viewBox="0 0 24 24" aria-hidden="true">
      <circle cx="12" cy="12" r="11" fill="#fff" />
      <SiPostman size={24} color="#ff6c37" />
    </svg>
  )],
  ["MySQL Workbench", (
    <Art size={28} box="0 0 28 28">
      <defs><linearGradient id="sql" x1="0" y1="0" x2="0" y2="1"><stop offset="0" stopColor="#2f74a5" /><stop offset="1" stopColor="#20506f" /></linearGradient></defs>
      <rect width="28" height="28" rx="2.500" fill="url(#sql)" />
      <path d="M4 4c4-1 8 1 11 5 3 4 3 7 5 10 1 2 4 3 5 5l-4-.5c2 0 3 .5 4 1.500M4 4c0 3 2 4 2.500 7 .5 3 0 5 1.500 8l2-3 1.500 4" stroke="#dfe9f0" strokeWidth="1.300" fill="none" />
      <path d="m20 2 2 2.500h3L26 8l-3-1-4-3z" fill="#fff" />
    </Art>
  )],
  ["Database client", (
    <Art size={30} box="0 0 30 30">
      <rect width="30" height="30" rx="3" fill="#1aad62" />
      <path d="M4 22c-1-6 2-13 10-14 3-1 6-1 7 1 3 0 5 3 5 7 0 2-2 1.500-3.500.5-1 1-2 .8-3 .3l-.5 5.200h-3.500l-.5-3c-1 .5-2 .5-3 .2L11 22.500H8.500l.5-3-2 3z" fill="#fff" />
      <path d="M14 13c0 3 2 5 5 4" stroke="#1aad62" fill="none" />
    </Art>
  )],
  ["Docker Desktop", (
    <Art size={30} box="0 0 30 30">
      <circle cx="15" cy="15" r="15" fill="#1d8fee" />
      <path d="M5 14h16c.7-1.200.5-2.500.5-3 1.500.5 2.200 1.300 2.500 2.300 1 0 2 .1 3 .7-.7 1.500-2 2-3.500 2-1.500 4.500-5 6.500-10 6.500C8 22.500 5 19 5 14z" fill="#fff" />
      <path d="M7 11h2.200v2.200H7zM9.800 11H12v2.200H9.800zM12.600 11h2.200v2.200h-2.200zM15.400 11h2.200v2.200h-2.200zM9.800 8.200H12v2.200H9.800zM12.600 8.200h2.200v2.200h-2.200zM15.400 8.200h2.200v2.200h-2.200zM15.400 5.500h2.200v2.200h-2.200z" fill="#fff" opacity="0.9" />
    </Art>
  )],
  ["MongoDB Compass", (
    <Art size={28}>
      <circle cx="12" cy="12" r="12" fill="#f7f7f7" /><path d="M12 3.500c2.600 2.500 4 5.300 4 8.300s-1.400 5.700-4 8.700c-2.600-3-4-5.700-4-8.700s1.400-5.800 4-8.300z" fill="#0f9a5c" /><path d="M12 3.500c2.600 2.500 4 5.300 4 8.300s-1.400 5.700-4 8.700z" fill="#00623e" />
    </Art>
  )],
  ["Brave", <BraveMark size={31} />, "active"],
];

const Taskbar = () => (
  <TaskbarRow>
    <Grain aria-hidden="true">
      <filter id="grain">
        <feTurbulence type="fractalNoise" baseFrequency="0.35" numOctaves="2" seed="4" />
        <feColorMatrix type="saturate" values="0" />
      </filter>
      <rect width="100%" height="100%" filter="url(#grain)" />
    </Grain>
    <Apps>
      {apps.map(([name, icon, mark]) => <AppButton key={name} aria-label={name} $mark={mark}>{icon}</AppButton>)}
    </Apps>
    <Tray>
      <Line size={16} box="0 0 16 16" sw={2}><path d="m2 11 6-6 6 6" /></Line>
      <TrayText $align="center" $m="0 21px 0 24px">ENG<br />IN</TrayText>
      <TrayIcons>
        <Line size={22} sw={1.8}><path d="M1.500 9.500c6-5.500 15-5.500 21 0M4.500 13c4.500-4 10.500-4 15 0M7.800 16.300c2.500-2.200 5.900-2.200 8.400 0" /><circle cx="12" cy="19.500" r="1.400" fill="currentColor" /></Line>
        <Line size={22} sw={1.7}><path d="M2 9v6h4l5 4.500v-15L6 9zM14.500 9c1.500 2 1.500 4 0 6M17.500 6.500c3 3.500 3 7.500 0 11" /><path d="M20.500 4.500c4 5 4 10 0 15" opacity="0.4" /></Line>
        <Line size={24} sw={1.8}><path d="M8 6.500h10c1.500 0 2.500 1 2.500 2.500v7c0 1.500-1 2.500-2.500 2.500H5c-1.500 0-2.500-1-2.500-2.500v-2M22.500 10.500v4" /><path d="M9 8.500h9v8H5v-2c3-1 4-3 4-6z" fill="currentColor" /><path d="M5.500 2.500v3.500M3 6h5v2c0 2-5 2-5 0zM5.500 9v3" /></Line>
      </TrayIcons>
      <TrayText $align="right" $m="0 0 0 18px">17:55<br />16-09-2025</TrayText>
    </Tray>
  </TaskbarRow>
);

const App = () => (
  <Screen>
    <GlobalStyle />
    <BrowserTabs />
    <AddressBar />
    <Shell />
    <Taskbar />
  </Screen>
);

export default App;
